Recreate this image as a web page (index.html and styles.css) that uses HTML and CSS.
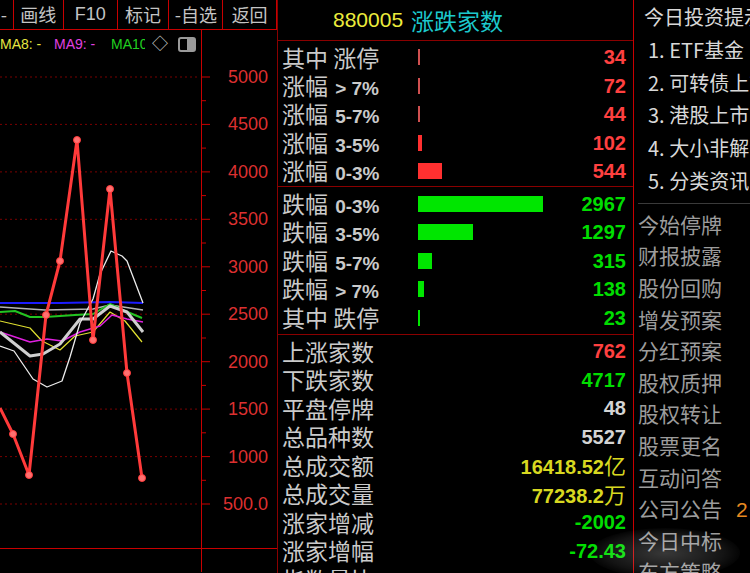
FILE: index.html
```html
<!DOCTYPE html>
<html lang="zh-CN">
<head>
<meta charset="utf-8">
<meta name="viewport" content="width=device-width, initial-scale=1.0">
<title>880005 涨跌家数</title>
<link rel="stylesheet" href="styles.css">
</head>

<body>
<div id="screen">
	<div class="kline">
		<div class="toolbar">
			<span class="tool tool_cut">-</span>
			<span class="tool tool_w50">画线</span>
			<span class="tool tool_w54 tool_num">F10</span>
			<span class="tool tool_w52">标记</span>
			<span class="tool tool_w54">-自选</span>
			<span class="tool tool_w54">返回</span>
		</div>
		<div class="chart">
			<div class="ma_legend">
				<span class="ma ma8">MA8: -</span>
				<span class="ma ma9">MA9: -</span>
				<span class="ma ma10">MA10: -</span>
				<span class="ma_diamond">&#9671;</span>
				<span class="ma_toggle"></span>
			</div>
			<svg class="chart_svg" width="277" height="543" viewBox="0 30 277 543">
				<g class="grid">
					<line x1="0" y1="78" x2="197" y2="78"/>
					<line x1="0" y1="125.4" x2="197" y2="125.4"/>
					<line x1="0" y1="172.9" x2="197" y2="172.9"/>
					<line x1="0" y1="220.3" x2="197" y2="220.3"/>
					<line x1="0" y1="267.8" x2="197" y2="267.8"/>
					<line x1="0" y1="315.2" x2="197" y2="315.2"/>
					<line x1="0" y1="362.7" x2="197" y2="362.7"/>
					<line x1="0" y1="410.1" x2="197" y2="410.1"/>
					<line x1="0" y1="457.6" x2="197" y2="457.6"/>
					<line x1="0" y1="505" x2="197" y2="505"/>
				</g>
				<g class="axis">
					<line x1="201.5" y1="30" x2="201.5" y2="573"/>
					<line x1="0" y1="549.5" x2="277" y2="549.5"/>
					<path d="M201 78h9M201 125.4h9M201 172.9h9M201 220.3h9M201 267.8h9M201 315.2h9M201 362.7h9M201 410.1h9M201 457.6h9M201 505h9"/>
					<path d="M201 101.7h5M201 149.1h5M201 196.6h5M201 244h5M201 291.5h5M201 339h5M201 386.4h5M201 433.8h5M201 481.3h5"/>
				</g>
				<g class="axis_text">
					<text x="268" y="78">5000</text>
					<text x="268" y="125.4">4500</text>
					<text x="268" y="172.9">4000</text>
					<text x="268" y="220.3">3500</text>
					<text x="268" y="267.8">3000</text>
					<text x="268" y="315.2">2500</text>
					<text x="268" y="362.7">2000</text>
					<text x="268" y="410.1">1500</text>
					<text x="268" y="457.6">1000</text>
					<text x="268" y="505">500.0</text>
				</g>
				<polyline class="ma_line ma_blue" points="0,304 60,304 110,303 143,304"/>
				<polyline class="ma_line ma_silver" points="0,308 45,311 93,310 110,306 143,311"/>
				<polyline class="ma_line ma_green" points="0,313 15,312 30,318 45,318 75,316 93,315 110,305 125,312 142,319"/>
				<polyline class="ma_line ma_yellow" points="0,322 30,329 42,342 60,351 75,337 93,333 110,313 125,322 142,343"/>
				<polyline class="ma_line ma_magenta" points="0,333 30,343 47,340 62,342 80,333 100,327 112,316 127,320 143,323"/>
				<polyline class="ma_line ma_thick" points="0,333 30,357 43,355 60,345 80,320 93,320 110,307 127,313 143,333"/>
				<polyline class="ma_line ma_white" points="0,347 14,352 33,380 47,388 62,382 70,358 80,324 93,300 100,275 111,252 122,257 127,262 143,304"/>
				<polyline class="main_line" points="0,409 13,435 29,476 46,316 60,262 77,141 93,341 110,190 127,374 142,479"/>
				<g class="markers">
					<circle cx="13" cy="435" r="3.5"/>
					<circle cx="29" cy="476" r="3.5"/>
					<circle cx="46" cy="316" r="3.5"/>
					<circle cx="60" cy="262" r="3.5"/>
					<circle cx="77" cy="141" r="3.5"/>
					<circle cx="93" cy="341" r="3.5"/>
					<circle cx="110" cy="190" r="3.5"/>
					<circle cx="127" cy="374" r="3.5"/>
					<circle cx="142" cy="479" r="3.5"/>
				</g>
			</svg>
		</div>
	</div>

	<div class="stats">
		<div class="stats_head">
			<span class="stats_code">880005</span>
			<span class="stats_name">涨跌家数</span>
		</div>
		<div class="group group_first">
			<div class="row"><span class="label">其中 涨停</span><span class="bar_cell"><i class="bar bar_thin_up" style="width:2px"></i></span><span class="value up">34</span></div>
			<div class="row"><span class="label">涨幅 <b>&gt; 7%</b></span><span class="bar_cell"><i class="bar bar_thin_up" style="width:2px"></i></span><span class="value up">72</span></div>
			<div class="row"><span class="label">涨幅 <b>5-7%</b></span><span class="bar_cell"><i class="bar bar_thin_up" style="width:2px"></i></span><span class="value up">44</span></div>
			<div class="row"><span class="label">涨幅 <b>3-5%</b></span><span class="bar_cell"><i class="bar bar_up" style="width:4px"></i></span><span class="value up">102</span></div>
			<div class="row"><span class="label">涨幅 <b>0-3%</b></span><span class="bar_cell"><i class="bar bar_up" style="width:24px"></i></span><span class="value up">544</span></div>
		</div>
		<div class="group group_mid">
			<div class="row"><span class="label">跌幅 <b>0-3%</b></span><span class="bar_cell"><i class="bar bar_down" style="width:125px"></i></span><span class="value down">2967</span></div>
			<div class="row"><span class="label">跌幅 <b>3-5%</b></span><span class="bar_cell"><i class="bar bar_down" style="width:55px"></i></span><span class="value down">1297</span></div>
			<div class="row"><span class="label">跌幅 <b>5-7%</b></span><span class="bar_cell"><i class="bar bar_down" style="width:14px"></i></span><span class="value down">315</span></div>
			<div class="row"><span class="label">跌幅 <b>&gt; 7%</b></span><span class="bar_cell"><i class="bar bar_down" style="width:6px"></i></span><span class="value down">138</span></div>
			<div class="row"><span class="label">其中 跌停</span><span class="bar_cell"><i class="bar bar_down" style="width:2px"></i></span><span class="value down">23</span></div>
		</div>
		<div class="group group_last">
			<div class="row"><span class="label">上涨家数</span><span class="bar_cell"></span><span class="value up">762</span></div>
			<div class="row"><span class="label">下跌家数</span><span class="bar_cell"></span><span class="value down">4717</span></div>
			<div class="row"><span class="label">平盘停牌</span><span class="bar_cell"></span><span class="value flat">48</span></div>
			<div class="row"><span class="label">总品种数</span><span class="bar_cell"></span><span class="value flat">5527</span></div>
			<div class="row"><span class="label">总成交额</span><span class="bar_cell"></span><span class="value amount">16418.52<em>亿</em></span></div>
			<div class="row"><span class="label">总成交量</span><span class="bar_cell"></span><span class="value amount">77238.2<em>万</em></span></div>
			<div class="row"><span class="label">涨家增减</span><span class="bar_cell"></span><span class="value down">-2002</span></div>
			<div class="row"><span class="label">涨家增幅</span><span class="bar_cell"></span><span class="value down">-72.43</span></div>
			<div class="row"><span class="label">指数量比</span><span class="bar_cell"></span><span class="value flat"></span></div>
		</div>
	</div>

	<div class="news">
		<ul class="news_top">
			<li>今日投资提示</li>
			<li>1. ETF基金</li>
			<li>2. 可转债上市</li>
			<li>3. 港股上市</li>
			<li>4. 大小非解禁</li>
			<li>5. 分类资讯</li>
		</ul>
		<ul class="news_list">
			<li>今始停牌</li>
			<li>财报披露</li>
			<li>股份回购</li>
			<li>增发预案</li>
			<li>分红预案</li>
			<li>股权质押</li>
			<li>股权转让</li>
			<li>股票更名</li>
			<li>互动问答</li>
			<li>公司公告<span class="news_count">2</span></li>
			<li>今日中标</li>
			<li>东方策略</li>
		</ul>
	</div>
	<div class="watermark"></div>
</div>
</body>
</html>
```

FILE: styles.css
```css
	:root {
		--LineRed: #c80000;
		--BoxRed: #8a0000;
		--Text: #c8c8c8;
		--CJK: "Noto Sans CJK SC", "Liberation Sans", sans-serif;
		--Num: "Liberation Sans", "Noto Sans CJK SC", sans-serif;
	}

	html, body {
		margin: 0;
		padding: 0;
		background-color: #000;
		overflow: hidden;
	}

	#screen {
		position: relative;
		display: flex;
		width: 750px;
		height: 573px;
		overflow: hidden;
		background-color: #000;
		color: var(--Text);
		font-family: var(--CJK);
	}

	/* left: k-line chart */
	.kline {
		width: 277px;
		flex: none;
		display: flex;
		flex-direction: column;
	}

	.toolbar {
		display: flex;
		height: 30px;
		border-bottom: 1px solid var(--LineRed);
		box-sizing: border-box;
		margin-left: -7px;
	}

	.tool {
		display: flex;
		align-items: center;
		justify-content: center;
		border-right: 1px solid var(--LineRed);
		box-sizing: border-box;
		font-size: 18px;
		line-height: 1;
		color: #c4c4c4;
		padding-bottom: 1px;
	}

	.tool_cut { width: 21px; justify-content: flex-end; padding-right: 6px; }
	.tool_w50 { width: 50px; }
	.tool_w52 { width: 52px; }
	.tool_w54 { width: 54px; }
	.tool_num { font-family: var(--Num); }

	.chart {
		position: relative;
		flex: 1;
	}

	.chart_svg {
		display: block;
		position: absolute;
		top: -1px;
		left: 0;
	}

	.ma_legend {
		position: absolute;
		top: 6px;
		left: 0;
		display: flex;
		align-items: center;
		height: 16px;
		font-family: var(--Num);
		font-size: 14px;
		z-index: 1;
	}

	.ma {
		white-space: nowrap;
		overflow: hidden;
		flex: none;
	}

	.ma8 { width: 54px; color: #e6e640; }
	.ma9 { width: 57px; color: #e040e0; }
	.ma10 { width: 34px; margin-right: 7px; color: #20d020; }

	.ma_diamond {
		width: 26px;
		color: #d0d0d0;
		font-size: 16px;
		line-height: 1;
	}

	.ma_toggle {
		width: 14px;
		height: 11px;
		border: 2px solid #9a9a9a;
		border-radius: 3px;
		background: linear-gradient(to right, transparent 50%, #9a9a9a 50%);
	}

	.grid line {
		stroke: #7a0000;
		stroke-width: 1;
		stroke-dasharray: 2 3;
	}

	.axis line, .axis path {
		stroke: var(--LineRed);
		stroke-width: 1;
		fill: none;
	}

	.axis_text text {
		fill: #dc3030;
		font-family: "Liberation Sans", sans-serif;
		font-size: 18px;
		text-anchor: end;
		dominant-baseline: central;
	}

	.ma_line {
		fill: none;
		stroke-linejoin: round;
	}

	.ma_blue { stroke: #1c1cff; stroke-width: 2; }
	.ma_silver { stroke: #b4b4b4; stroke-width: 1.5; }
	.ma_green { stroke: #22c422; stroke-width: 2; }
	.ma_yellow { stroke: #e0e030; stroke-width: 1.2; }
	.ma_magenta { stroke: #e020e0; stroke-width: 1.5; }
	.ma_thick { stroke: #cfcfcf; stroke-width: 3; }
	.ma_white { stroke: #ececec; stroke-width: 1.3; }

	.main_line {
		fill: none;
		stroke: #ff3a3a;
		stroke-width: 3;
		stroke-linejoin: round;
	}

	.markers circle {
		fill: #ff7070;
		stroke: #ff3a3a;
		stroke-width: 1;
	}

	/* middle: advance / decline stats */
	.stats {
		width: 357px;
		flex: none;
		border-left: 1px solid var(--BoxRed);
		border-right: 1px solid var(--LineRed);
		box-sizing: border-box;
	}

	.stats_head {
		display: flex;
		align-items: center;
		gap: 8px;
		height: 41px;
		padding-left: 55px;
		border-bottom: 1px solid var(--BoxRed);
		box-sizing: border-box;
	}

	.stats_code {
		font-family: var(--Num);
		font-size: 21px;
		color: #ecec3c;
	}

	.stats_name {
		font-size: 23px;
		color: #1cc8cc;
	}

	.group {
		border-bottom: 1px solid var(--BoxRed);
	}

	.group_first { padding-top: 2px; }
	.group_mid { padding-top: 3px; padding-bottom: 2px; }
	.group_last { padding-top: 2px; border-bottom: none; }

	.row {
		display: grid;
		grid-template-columns: 136px 1fr auto;
		align-items: center;
		height: 28.5px;
		padding: 0 7px 0 4px;
	}

	.label {
		font-size: 23px;
		line-height: 1;
		white-space: nowrap;
		color: #cacaca;
	}

	.label b {
		font-family: var(--Num);
		font-size: 19px;
		margin-left: 2px;
	}

	.bar_cell {
		display: flex;
		align-items: center;
		height: 100%;
	}

	.bar {
		display: block;
		height: 16px;
	}

	.bar_up { background-color: #ff3030; }
	.bar_thin_up { background-color: #d05050; }
	.bar_down { background-color: #00e600; }

	.value {
		font-family: var(--Num);
		font-weight: bold;
		font-size: 20px;
		line-height: 1;
		text-align: right;
	}

	.value em {
		font-family: var(--CJK);
		font-style: normal;
		font-weight: normal;
		font-size: 22px;
	}

	.up { color: #ff4040; }
	.down { color: #00dd00; }
	.flat { color: #d4d4d4; }
	.amount { color: #d8d820; }

	/* right: news */
	.news {
		flex: 1;
		overflow: hidden;
	}

	.news ul {
		list-style: none;
		margin: 0;
		padding: 0;
	}

	.news li {
		white-space: nowrap;
	}

	.news_top {
		padding: 1px 0 5px 10px !important;
		border-bottom: 1px solid #3a3a3a;
		margin-left: 4px !important;
	}

	.news_top li {
		height: 32.8px;
		line-height: 32.8px;
		font-size: 20px;
		color: #d8d8d8;
	}

	.news_top li:first-child {
		margin-left: -4px;
	}

	.news_list {
		padding: 5px 0 0 4px !important;
	}

	.news_list li {
		height: 31.6px;
		line-height: 31.6px;
		font-size: 21px;
		color: #9c9c9c;
	}

	.news_count {
		margin-left: 14px;
		color: #e88a20;
		font-family: var(--Num);
	}

	/* soft watermark glow in the lower right corner */
	.watermark {
		position: absolute;
		left: 590px;
		top: 528px;
		width: 150px;
		height: 50px;
		border-radius: 50%;
		background: radial-gradient(ellipse at center, rgba(255, 255, 255, 0.22) 0%, rgba(255, 255, 255, 0.08) 55%, rgba(255, 255, 255, 0) 75%);
		pointer-events: none;
	}
```
